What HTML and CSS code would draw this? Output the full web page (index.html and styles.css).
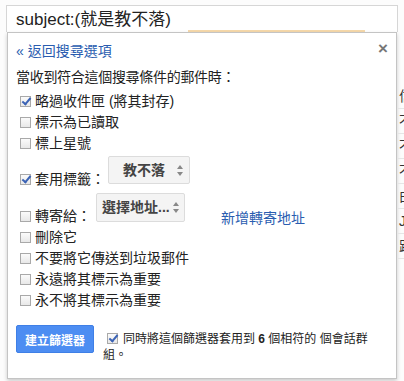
FILE: index.html
```html
<!DOCTYPE html>
<html lang="zh-Hant">
<head>
    <meta charset="UTF-8">
    <meta name="viewport" content="width=device-width, initial-scale=1.0">
    <title>建立篩選器</title>
    <link rel="stylesheet" href="styles.css">
</head>
<body>
    <div class="page">
        <div class="compose">
            <div class="search">
                <div class="search-text">subject:(就是教不落)</div>
                <div class="suggest-line"></div>
            </div>

            <div class="panel">
                <div class="panel-head">
                    <a class="back-link" href="#">« 返回搜尋選項</a>
                    <span class="close">&times;</span>
                </div>

                <p class="intro">當收到符合這個搜尋條件的郵件時：</p>

                <div class="opt"><span class="cb checked"></span>略過收件匣 (將其封存)</div>
                <div class="opt"><span class="cb"></span>標示為已讀取</div>
                <div class="opt"><span class="cb"></span>標上星號</div>

                <div class="opt opt-select opt-label">
                    <span class="cb checked"></span>套用標籤：
                    <div class="fake-select select-label">
                        <span>教不落</span>
                        <span class="arrows"></span>
                    </div>
                </div>

                <div class="opt opt-select opt-forward">
                    <span class="cb"></span>轉寄給：
                    <div class="fake-select select-address">
                        <span>選擇地址...</span>
                        <span class="arrows"></span>
                    </div>
                    <a class="add-link" href="#">新增轉寄地址</a>
                </div>

                <div class="opt"><span class="cb"></span>刪除它</div>
                <div class="opt"><span class="cb"></span>不要將它傳送到垃圾郵件</div>
                <div class="opt"><span class="cb"></span>永遠將其標示為重要</div>
                <div class="opt"><span class="cb"></span>永不將其標示為重要</div>

                <div class="panel-foot">
                    <button class="create-btn">建立篩選器</button>
                    <p class="apply-text"><span class="cb checked"></span>同時將這個篩選器套用到 <b>6</b> 個相符的 個會話群組。</p>
                </div>
            </div>
        </div>

        <!-- mail list peeking out behind the dropdown -->
        <div class="list-behind">
            <div class="row">信</div>
            <div class="row">不</div>
            <div class="row">不</div>
            <div class="row">不</div>
            <div class="row">由</div>
            <div class="row">J</div>
            <div class="row">距</div>
        </div>
    </div>
</body>
</html>
```

FILE: styles.css
```css
* {
    margin: 0;
    padding: 0;
    box-sizing: border-box;
}

body {
    font-family: 'Liberation Sans', 'Noto Sans CJK TC', sans-serif;
    color: #222;
    background: #fcfcfc;
    overflow: hidden;
}

.page {
    display: flex;
    height: 381px;
}

.compose {
    width: 392px;
    margin: 5px 0 0 6px;
}

/* Search box */
.search {
    background: white;
    border: 1px solid #d6d6d6;
    border-bottom: none;
    padding-top: 3px;
}

.search-text {
    font-size: 17px;
    line-height: 21px;
    padding-left: 9px;
}

.suggest-line {
    margin-left: 181px;
    width: 177px;
    height: 2px;
    background: #f6d9ab;
}

/* Dropdown panel */
.panel {
    margin: 0 1px;
    background: white;
    border: 1px solid #c4c4c4;
    box-shadow: 0 2px 4px rgba(0, 0, 0, 0.2);
    padding: 7px 8px 15px 8px;
    font-size: 14px;
}

.panel-head {
    display: flex;
    justify-content: space-between;
    align-items: center;
    height: 20px;
}

.back-link {
    color: #2a5db0;
    text-decoration: none;
}

.close {
    color: #777;
    font-size: 17px;
    font-weight: bold;
    margin-right: 0;
    margin-top: -2px;
}

.intro {
    margin-top: 7px;
    line-height: 20px;
    letter-spacing: -0.3px;
}

.opt {
    display: flex;
    align-items: center;
    height: 21px;
    line-height: 21px;
}

.intro + .opt {
    margin-top: 3.5px;
}

/* checkbox */
.cb {
    display: inline-block;
    flex-shrink: 0;
    width: 11px;
    height: 11px;
    margin: 1px 4px 0 4px;
    border: 1px solid #a9a9a9;
    background: linear-gradient(#fbfbfb, #e8e8e8);
    position: relative;
}

.cb.checked::after {
    content: '';
    position: absolute;
    left: 3px;
    top: -1px;
    width: 3px;
    height: 7px;
    border: solid #3b63b5;
    border-width: 0 2px 2px 0;
    transform: rotate(40deg);
}

/* rows with a select */
.opt-select {
    height: auto;
    align-items: flex-end;
    padding-top: 2.5px;
}

.opt-select .cb {
    margin-bottom: 5px;
}

.fake-select {
    display: flex;
    align-items: center;
    justify-content: space-between;
    height: 28px;
    background: #f4f4f4;
    border: 1px solid #dcdcdc;
    border-radius: 2px;
    font-weight: bold;
    color: #444;
}

.select-label {
    width: 82px;
    margin: 0 0 6px 3px;
    padding: 0 5px 0 14px;
}

.select-address {
    width: 89px;
    height: 29px;
    margin: 0 0 5px 5px;
    padding: 0 4px 0 5px;
}

.arrows {
    width: 7px;
    height: 11px;
    position: relative;
}

.arrows::before,
.arrows::after {
    content: '';
    position: absolute;
    left: 0;
    border-left: 3.5px solid transparent;
    border-right: 3.5px solid transparent;
}

.arrows::before {
    top: 0;
    border-bottom: 4px solid #888;
}

.arrows::after {
    bottom: 0;
    border-top: 4px solid #888;
}

.add-link {
    color: #2a5db0;
    text-decoration: none;
    margin: 0 0 0 36px;
    line-height: 21px;
    position: relative;
    top: 2px;
}

/* footer */
.panel-foot {
    display: flex;
    align-items: flex-start;
    margin-top: 14.5px;
}

.create-btn {
    width: 78px;
    height: 28px;
    flex-shrink: 0;
    background: #4d8df2;
    border: 1px solid #3f7fe6;
    border-radius: 2px;
    color: white;
    font-family: inherit;
    font-size: 12px;
    font-weight: bold;
}

.apply-text {
    width: 272px;
    margin: 6px 0 0 9px;
    font-size: 12px;
    line-height: 16px;
}

.apply-text .cb {
    margin: 0 5px 0 4px;
    vertical-align: -1px;
}

/* list behind */
.list-behind {
    flex: 1;
    overflow: hidden;
    padding-top: 84px;
    font-size: 14px;
    white-space: nowrap;
}

.list-behind .row {
    height: 25px;
    line-height: 24px;
    padding-left: 1px;
    border-bottom: 1px solid #e6e6e6;
    color: #333;
}
```
